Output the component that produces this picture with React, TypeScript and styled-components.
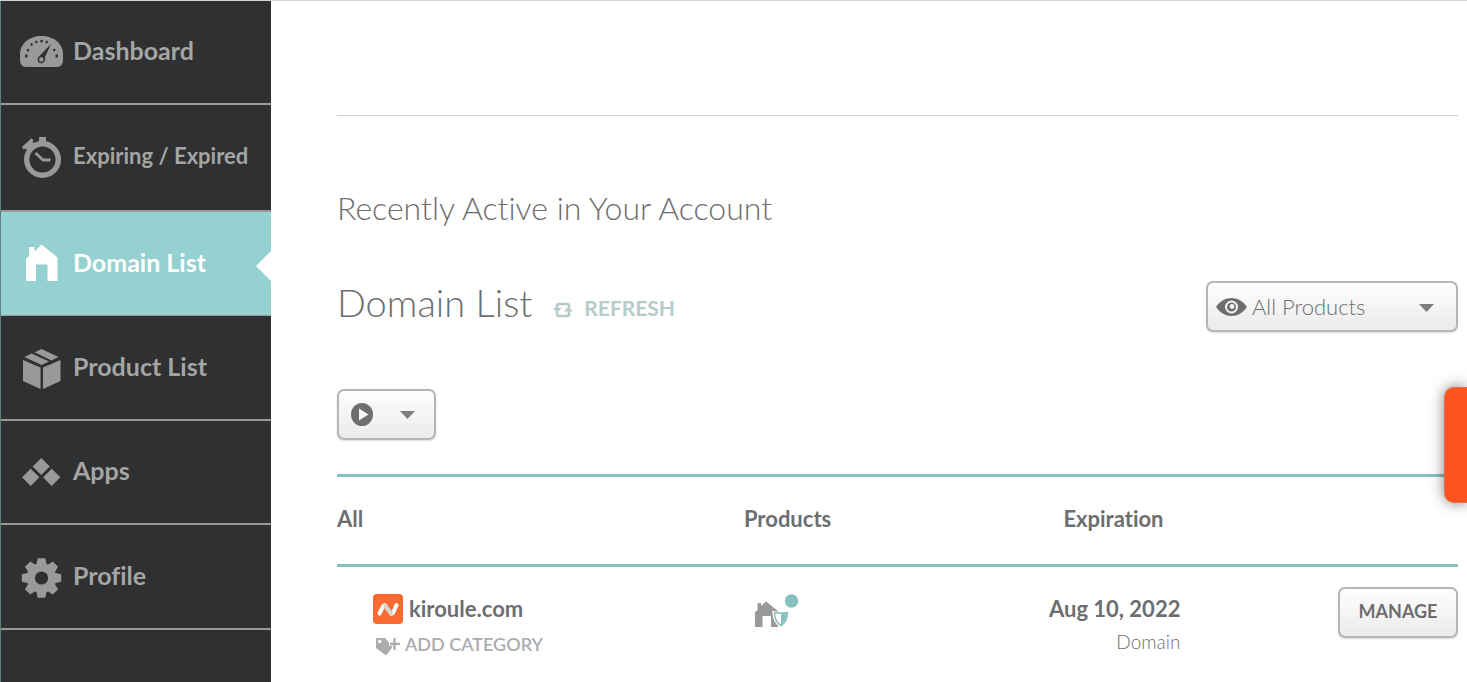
import React from "react";
import styled, { createGlobalStyle, css } from "styled-components";

const teal = "#88c0bf";
const text = "#6d6e70";
const navGray = "#999999";

const GlobalStyle = createGlobalStyle`
  *, *::before, *::after { box-sizing: border-box; }
  body {
    margin: 0;
    background: #fff;
    color: ${text};
    font-family: Lato, "Open Sans", sans-serif;
    font-variant-ligatures: none;
    overflow: hidden;
  }
  button, select { font: inherit; color: inherit; }
`;

const Page = styled.div`
  display: flex;
  height: 100vh;
  border-top: 1px solid #d2d5d4;
`;

const Sidebar = styled.nav`
  flex: 0 0 271px;
  background: #2f3032;
  border-left: 1px solid #5f7f7e;
`;

const NavList = styled.ul`
  display: grid;
  grid-template-rows: 104px 107px 104px 105px 104px 105px;
  margin: 0;
  padding: 0;
  list-style: none;
`;

const NavLink = styled.a<{ $active?: boolean; $compact?: boolean }>`
  position: relative;
  display: flex;
  align-items: center;
  height: 100%;
  padding: 0 0 4px 18px;
  gap: 10px;
  border-bottom: 2px solid ${navGray};
  color: #a5a6a4;
  font-size: ${(p) => (p.$compact ? 22 : 25)}px;
  font-weight: 700;
  line-height: 30px;
  text-decoration: none;
  white-space: nowrap;
  svg { flex: none; margin-top: 4px; color: ${navGray}; }
  ${(p) =>
    p.$active &&
    css`
      background: #94d1d0;
      color: #fff;
      border-bottom-width: 1px;
      svg { color: #fff; }
      &::after {
        content: "";
        position: absolute;
        right: 0;
        top: 39px;
        border: solid transparent;
        border-width: 15px 15px 15px 0;
        border-right-color: #fff;
      }
    `}
`;

const Main = styled.main`
  flex: 1;
  min-width: 0;
  padding: 114px 9px 0 66px;
`;

const Divider = styled.hr`
  margin: 0;
  border: 0;
  border-top: 1px solid #d1d1d1;
`;

const SectionTitle = styled.h2`
  margin: 72px 0 0;
  font-size: 32px;
  font-weight: 300;
  line-height: 40px;
`;

const TitleRow = styled.div`
  display: flex;
  align-items: center;
  margin-top: 52px;
  height: 52px;
`;

const Title = styled.h1`
  margin: 0 20px 8px 0;
  font-size: 38px;
  font-weight: 300;
  line-height: 44px;
`;

const Refresh = styled.button`
  display: flex;
  align-items: center;
  gap: 10px;
  margin: 4px auto 0 0;
  padding: 0;
  border: 0;
  background: none;
  color: #b5cccb;
  font-size: 21px;
  font-weight: 700;
  line-height: 28px;
  svg { margin-top: 3px; }
`;

const raised = css`
  border: 2px solid #b6b6b6;
  border-radius: 7px;
  background: linear-gradient(#fefefe, #ebebeb);
  box-shadow: 0 1px 2px rgba(0, 0, 0, 0.15);
`;

const Filter = styled.label`
  position: relative;
  width: 252px;
  color: ${text};
  svg { position: absolute; pointer-events: none; }
`;

const FilterSelect = styled.select`
  ${raised}
  appearance: none;
  display: block;
  width: 100%;
  height: 51px;
  padding: 0 44px 0 44px;
  font-size: 22px;
  font-weight: 300;
`;

const EyeIcon = styled.svg`
  left: 10px;
  top: 16px;
`;

const SelectCaret = styled.svg`
  right: 24px;
  top: 23px;
`;

const ActionButton = styled.button`
  ${raised}
  display: flex;
  align-items: center;
  justify-content: space-between;
  width: 99px;
  height: 51px;
  margin-top: 57px;
  padding: 0 19px 0 12px;
`;

const Table = styled.table`
  width: 100%;
  margin-top: 34px;
  border-collapse: collapse;
  table-layout: fixed;
  th, td { padding: 0; text-align: left; }
  th { padding-bottom: 4px; }
  td { padding-top: 20px; vertical-align: top; }
`;

const HeadCell = styled.th`
  height: 90px;
  border-top: 3px solid ${teal};
  border-bottom: 3px solid ${teal};
  font-size: 22px;
  font-weight: 700;
  line-height: 28px;
`;

const DomainName = styled.a`
  display: flex;
  align-items: center;
  gap: 6px;
  margin-top: 6px;
  padding-left: 36px;
  height: 32px;
  color: ${text};
  font-size: 22px;
  font-weight: 700;
  line-height: 30px;
  text-decoration: none;
`;

const AddCategory = styled.button`
  display: flex;
  align-items: center;
  gap: 4px;
  margin: 6px 0 0 39px;
  padding: 0;
  border: 0;
  background: none;
  color: #abacae;
  font-size: 18px;
  font-weight: 600;
  line-height: 26px;
  svg { margin-top: 3px; }
`;

const ExpirationCell = styled.div`
  width: 117px;
  margin-top: 6px;
  display: flex;
  flex-direction: column;
  align-items: flex-end;
  white-space: nowrap;
`;

const ExpiryDate = styled.time`
  font-size: 22px;
  font-weight: 700;
  line-height: 32px;
`;

const ExpiryKind = styled.span`
  margin-top: 4px;
  font-size: 19px;
  font-weight: 300;
  line-height: 26px;
`;

const ManageButton = styled.button`
  ${raised}
  display: block;
  width: 120px;
  height: 51px;
  margin-left: auto;
  padding: 0 0 4px;
  font-size: 18px;
  font-weight: 700;
`;

const ProductIcons = styled.svg`
  display: block;
  margin: 7px 0 0 10px;
`;

const FeedbackTab = styled.button`
  position: fixed;
  right: 0;
  top: 387px;
  width: 23px;
  height: 116px;
  padding: 0;
  border: 1px solid #e0704c;
  border-right: 0;
  border-radius: 10px 0 0 10px;
  background: #ff5421;
  box-shadow: 0 0 14px rgba(0, 0, 0, 0.5);
`;

const GaugeIcon = () => (
  <svg width="44" height="36" viewBox="0 0 44 36" aria-hidden="true">
    <path fill="currentColor" d="M1 20C1 10 10 2 22.500 2s21.500 8 21.500 18v6c0 4-2 7-6 7H7c-4 0-6-3-6-7Z" />
    <g fill="#2f3032">
      <path d="M32 10 25.800 23.500C27 26 25 29.500 22 29.300 18.500 29 17.500 25 20 22.500Z" />
      <path d="M6 20.500h2.500v3H6zM36.500 20.500H39v3h-2.500zM7.500 15.500l2-1 1 2.200-2 1zM11 10l2-1 1.200 2-2 1zM34.800 14.500l2 .8-1 2.200-2-.8zM16 7.200l2-.6.600 2.200-2 .6zM21.300 6h2.500v2.200h-2.500zM27 6.600l2 .6-.600 2.200-2-.6z" />
    </g>
    <circle cx="22.300" cy="25.500" r="2.300" fill="currentColor" />
  </svg>
);

const StopwatchIcon = () => (
  <svg width="44" height="44" viewBox="0 1 44 44" aria-hidden="true">
    <circle cx="23.500" cy="24.500" r="15.800" fill="none" stroke="currentColor" strokeWidth="5.400" />
    <path fill="currentColor" d="M20 2h7v6h-7zM3 12 12.500 3.200l2.200 2.200-1.200 1.600L16 9l-7.500 7-2-2.800L4.700 14.800Z" />
    <path d="M16.500 18 24 25h7.500" fill="none" stroke="currentColor" strokeWidth="3" strokeLinejoin="round" />
  </svg>
);

const HouseIcon = () => (
  <svg width="44" height="40" viewBox="0 1 44 40" aria-hidden="true">
    <path fill="currentColor" d="M7 38V15.500l3-2.500V4h5.500v4.500L22.500 1.500 38.500 14.500V38h-10V21.500H17V38Z" />
  </svg>
);

const BoxIcon = () => (
  <svg width="44" height="42" viewBox="0 0 44 42" aria-hidden="true">
    <g fill="currentColor">
      <path d="M4 13 21.500 20.500v21.500L4 34ZM41.500 13 24 20.500v21.500l17.500-8Z" />
      <path d="M5.500 10 12.500 6.500 30 14.500 22.500 18ZM15.500 5.300 22.500 2 39.500 10 32.500 13.500Z" />
    </g>
  </svg>
);

const DiamondsIcon = () => (
  <svg width="44" height="30" viewBox="0 0 44 30" aria-hidden="true">
    <path fill="currentColor" d="M22.200 1l8.500 8.500-8.500 8.500-8.500-8.500ZM11.700 11.700l8.600 8.600-8.600 8.600-8.600-8.600ZM32.700 11.700l8.600 8.600-8.600 8.600-8.600-8.600Z" />
  </svg>
);

const GearIcon = () => (
  <svg width="44" height="42" viewBox="-22 -22 44 42" aria-hidden="true">
    <g fill="currentColor" transform="translate(.5 0)">
      {[0, 45, 90, 135].map((angle) => (
        <path key={angle} transform={`rotate(${angle})`} d="M-3.800-19.700h7.600L5.500-12v24L3.800 19.700h-7.600L-5.500 12v-24Z" />
      ))}
      <circle r="14.800" />
    </g>
    <circle cx=".5" r="6.600" fill="#2f3032" />
  </svg>
);

const Caret = (props: React.SVGProps<SVGSVGElement>) => (
  <svg width="15" height="8" viewBox="0 0 15 8" aria-hidden="true" {...props}>
    <path fill="#7d7d7d" d="M0 0h15L7.500 8Z" />
  </svg>
);

const navItems = [
  { label: "Dashboard", icon: <GaugeIcon /> },
  { label: "Expiring / Expired", icon: <StopwatchIcon />, compact: true },
  { label: "Domain List", icon: <HouseIcon />, active: true },
  { label: "Product List", icon: <BoxIcon /> },
  { label: "Apps", icon: <DiamondsIcon /> },
  { label: "Profile", icon: <GearIcon /> },
];

export default function App() {
  return (
    <Page>
      <GlobalStyle />
      <Sidebar aria-label="Account">
        <NavList>
          {navItems.map((item) => (
            <li key={item.label}>
              <NavLink href="#" $active={item.active} $compact={item.compact} aria-current={item.active ? "page" : undefined}>
                {item.icon}
                <span>{item.label}</span>
              </NavLink>
            </li>
          ))}
        </NavList>
      </Sidebar>
      <Main>
        <Divider />
        <SectionTitle>Recently Active in Your Account</SectionTitle>
        <TitleRow>
          <Title>Domain List</Title>
          <Refresh type="button">
            <svg width="22" height="18" viewBox="0 0 22 18" aria-hidden="true">
              <g fill="none" stroke="currentColor" strokeWidth="2.600">
                <path d="M5 8V5q0-2 2-2h8q2 0 2 2v2" />
                <path d="M17 9v4q0 2-2 2H7q-2 0-2-2v-2" />
              </g>
              <path fill="currentColor" d="M.500 7h9L5 11.500ZM12 10.500 16.500 5.500 21 10.500Z" />
            </svg>
            REFRESH
          </Refresh>
          <Filter>
            <FilterSelect aria-label="Product filter">
              <option>All Products</option>
            </FilterSelect>
            <EyeIcon width="32" height="20" viewBox="0 0 32 20" aria-hidden="true">
              <path fill="currentColor" d="M0 10C8-2 23-2 31 10 23 22 8 22 0 10Z" />
              <circle cx="15.500" cy="10" r="5.500" fill="none" stroke="#f4f4f4" strokeWidth="2" />
              <circle cx="16" cy="9.500" r="2.400" fill="#f4f4f4" />
            </EyeIcon>
            <SelectCaret as={Caret} />
          </Filter>
        </TitleRow>
        <ActionButton type="button" aria-label="Bulk actions">
          <svg width="22" height="23" viewBox="0 0 22 23" aria-hidden="true">
            <ellipse cx="11" cy="11.500" rx="11" ry="11.500" fill={text} />
            <path fill="#f6f6f6" d="M8 5.500v12l9.500-6Z" />
          </svg>
          <Caret />
        </ActionButton>
        <Table>
          <colgroup>
            <col style={{ width: "36.300%" }} />
            <col style={{ width: "28.500%" }} />
            <col style={{ width: "20%" }} />
            <col />
          </colgroup>
          <thead>
            <tr>
              <HeadCell scope="col">All</HeadCell>
              <HeadCell scope="col">Products</HeadCell>
              <HeadCell scope="col">Expiration</HeadCell>
              <HeadCell as="td" />
            </tr>
          </thead>
          <tbody>
            <tr>
              <td>
                <DomainName href="#">
                  <svg width="30" height="30" viewBox="0 0 30 30" aria-hidden="true">
                    <rect width="30" height="30" rx="4" fill="#f86a32" />
                    <g fill="none" strokeLinecap="round" strokeWidth="4">
                      <path stroke="#fff" d="M6.500 19.500 10 12.500Q11 10 13 12.500" />
                      <path stroke="#fff" d="M18 19.500Q19.500 20 20.500 18L23.500 11" />
                      <path stroke="#d9d6d3" d="M12 11.500 18 19.500" />
                    </g>
                  </svg>
                  kiroule.com
                </DomainName>
                <AddCategory type="button">
                  <svg width="25" height="20" viewBox="0 0 25 20" aria-hidden="true">
                    <path fill="currentColor" d="M0 2h9l8 8.500L10 19.500 0 12Z" />
                    <circle cx="3.700" cy="5.500" r="1.700" fill="#fff" />
                    <path d="M13 7.800h11M18.500 2v12" stroke="#fff" strokeWidth="4" />
                    <path d="M14 7.800h10M18.500 2v12" stroke="currentColor" strokeWidth="2.300" />
                  </svg>
                  ADD CATEGORY
                </AddCategory>
              </td>
              <td>
                <ProductIcons width="46" height="36" viewBox="0 0 46 36" role="img" aria-label="Domain with privacy">
                  <path fill={navGray} d="M1 33V18l2.500-2V9h3.500v3l5-4.500L24 17v16h-7V22H8.500v11Z" />
                  <path fill="#fff" stroke="#fff" strokeWidth="3" d="M20 18.500q6 1.500 13.500 0 0 10-6.500 13.500-7-4-7-13.500Z" />
                  <path fill="#fff" stroke={teal} strokeWidth="1.500" d="M20.500 18.500q6 1 13 0 0 9-6.500 13-6.500-4-6.500-13Z" />
                  <path fill={teal} d="M27 19.500q3 .2 6-.5-.5 8-6 12Z" />
                  <circle cx="37.500" cy="7" r="6.700" fill={teal} />
                </ProductIcons>
              </td>
              <td>
                <ExpirationCell>
                  <ExpiryDate dateTime="2022-08-10">Aug 10, 2022</ExpiryDate>
                  <ExpiryKind>Domain</ExpiryKind>
                </ExpirationCell>
              </td>
              <td>
                <ManageButton type="button">MANAGE</ManageButton>
              </td>
            </tr>
          </tbody>
        </Table>
      </Main>
      <FeedbackTab type="button" aria-label="Feedback" />
    </Page>
  );
}
